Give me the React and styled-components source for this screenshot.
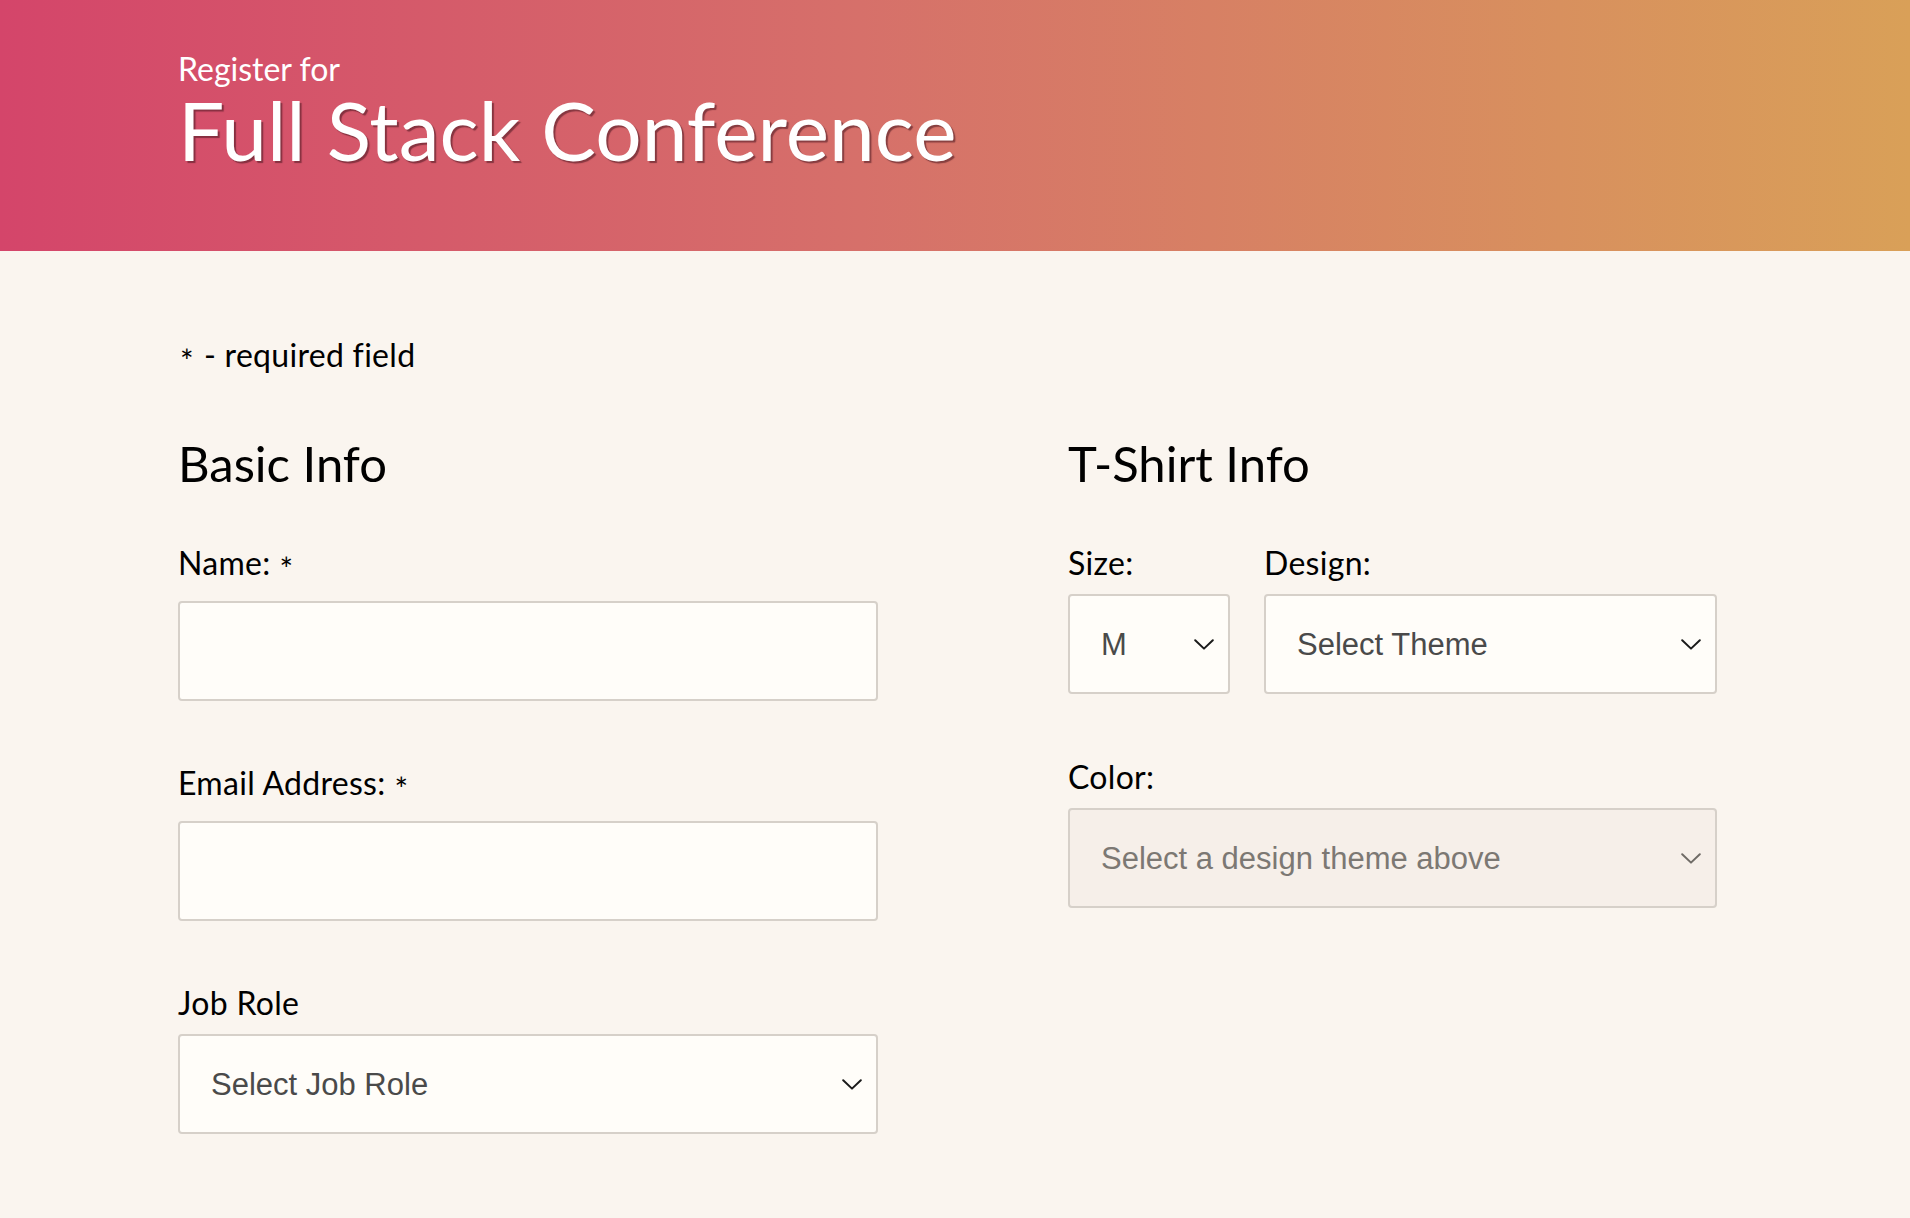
import React from "react";
import styled, { createGlobalStyle } from "styled-components";

const GlobalStyle = createGlobalStyle`
  * { box-sizing: border-box; }
  html, body { margin: 0; padding: 0; }
  body {
    background: #faf5ef;
    font-family: "Lato", "Noto Sans", sans-serif;
    color: #000;
    min-height: 1218px;
  }
`;

const Header = styled.header`
  height: 251px;
  background: linear-gradient(to right, #d4456a 0%, #d6706a 45%, #d9a058 100%);
  padding: 51px 0 0 178px;
  color: #fff;
`;

const Kicker = styled.div`
  font-size: 32px;
  line-height: 35px;
  font-weight: 400;
`;

const Title = styled.h1`
  margin: 0;
  font-size: 82px;
  line-height: 86px;
  font-weight: 400;
  text-shadow: 2px 2px 1px rgba(70, 20, 30, 0.55);
`;

const Main = styled.main`
  padding: 86px 0 60px 178px;
`;

const Required = styled.p`
  margin: 0 0 61px 2px;
  font-size: 32px;
  line-height: 36px;
  letter-spacing: 0.3px;
`;

const Columns = styled.div`
  display: grid;
  grid-template-columns: 700px 649px;
  column-gap: 190px;
  align-items: start;
`;

const Fieldset = styled.section`
  display: flex;
  flex-direction: column;
`;

const Legend = styled.h2`
  margin: 0 0 53px;
  font-size: 49px;
  line-height: 58px;
  font-weight: 400;
`;

const Field = styled.div`
  display: flex;
  flex-direction: column;
  margin-bottom: ${(p) => p.$gap || 64}px;
  min-width: 0;
`;

const Label = styled.label`
  font-size: 32px;
  line-height: 36px;
  letter-spacing: 0.3px;
  margin-bottom: ${(p) => (p.$select ? "13px" : "20px")};
`;

const Star = styled.span`
  display: inline-block;
  position: relative;
  top: 6px;
  font-size: 32px;
  margin: ${(p) => (p.$lead ? "0 10px 0 0" : "0 0 0 9px")};
`;

const TextInput = styled.input`
  height: 100px;
  width: 100%;
  background: #fffdf9;
  border: 2px solid #d6d0c9;
  border-radius: 4px;
  font-family: "Liberation Sans", Arial, sans-serif;
  font-size: 31px;
  padding: 0 32px;
  outline: none;
`;

const SelectWrap = styled.div`
  position: relative;
  width: 100%;
`;

const Select = styled.select`
  appearance: none;
  -webkit-appearance: none;
  display: block;
  width: 100%;
  height: 100px;
  border: 2px solid #d6d0c9;
  border-radius: 4px;
  background: ${(p) => (p.disabled ? "#f6efe9" : "#fffdf9")};
  color: ${(p) => (p.disabled ? "#7c7873" : "#4a4a4a")};
  font-family: "Liberation Sans", Arial, sans-serif;
  font-size: 31px;
  padding: 0 52px 0 31px;
  outline: none;
  opacity: 1;
`;

const Chevron = styled.svg`
  position: absolute;
  right: 16px;
  top: 50%;
  width: 20px;
  height: 11px;
  margin-top: -5px;
  pointer-events: none;
`;

const Row = styled.div`
  display: grid;
  grid-template-columns: 162px 453px;
  column-gap: 34px;
`;

function Dropdown({ options, disabled }) {
  return (
    <SelectWrap>
      <Select disabled={disabled} defaultValue={options[0]}>
        {options.map((o) => (
          <option key={o} value={o}>
            {o}
          </option>
        ))}
      </Select>
      <Chevron viewBox="0 0 20 11" fill="none">
        <path
          d="M1.2 1.2 L10 9.6 L18.8 1.2"
          stroke={disabled ? "#6f6b66" : "#1a1a1a"}
          strokeWidth="2"
          strokeLinecap="round"
          strokeLinejoin="round"
        />
      </Chevron>
    </SelectWrap>
  );
}

export default function App() {
  return (
    <>
      <GlobalStyle />
      <Header>
        <Kicker>Register for</Kicker>
        <Title>Full Stack Conference</Title>
      </Header>
      <Main>
        <Required>
          <Star $lead>*</Star>- required field
        </Required>
        <Columns>
          <Fieldset>
            <Legend>Basic Info</Legend>
            <Field>
              <Label htmlFor="name">
                Name:<Star>*</Star>
              </Label>
              <TextInput id="name" type="text" />
            </Field>
            <Field>
              <Label htmlFor="email">
                Email Address:<Star>*</Star>
              </Label>
              <TextInput id="email" type="email" />
            </Field>
            <Field>
              <Label $select>Job Role</Label>
              <Dropdown options={["Select Job Role", "Full Stack JavaScript Developer", "Front End Developer", "Back End Developer", "Designer", "Student", "Other"]} />
            </Field>
          </Fieldset>
          <Fieldset>
            <Legend>T-Shirt Info</Legend>
            <Row>
              <Field $gap={65}>
                <Label $select>Size:</Label>
                <Dropdown options={["M", "S", "L", "XL"]} />
              </Field>
              <Field $gap={65}>
                <Label $select>Design:</Label>
                <Dropdown options={["Select Theme", "Theme - JS Puns", "Theme - I ♥ JS"]} />
              </Field>
            </Row>
            <Field>
              <Label $select>Color:</Label>
              <Dropdown disabled options={["Select a design theme above"]} />
            </Field>
          </Fieldset>
        </Columns>
      </Main>
    </>
  );
}
